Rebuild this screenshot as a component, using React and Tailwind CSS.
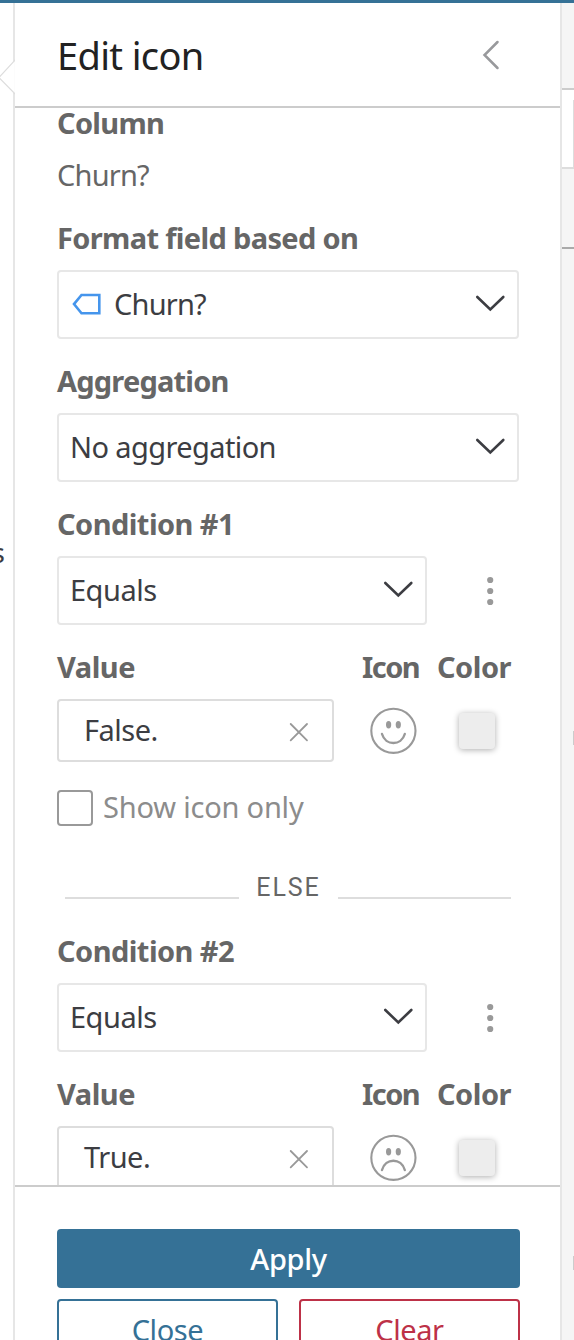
import React from "react";

const Label = ({ children, className = "" }) => (
  <div className={`h-[30px] whitespace-nowrap text-[29px] leading-[30px] font-bold text-[#666] ${className}`}>{children}</div>
);

const Chevron = ({ className = "" }) => (
  <svg width="32" height="20" viewBox="0 0 32 20" fill="none" stroke="#3c3d42" strokeWidth="2.6" strokeLinecap="round" strokeLinejoin="miter" className={`shrink-0 ${className}`}>
    <path d="M3.3 4 16.3 16.5 29.3 4" />
  </svg>
);

const Select = ({ icon, children, className = "" }) => (
  <div className={`flex h-[69px] items-center rounded-[4px] border-2 border-[#e7e7e7] bg-white pr-[11px] pl-[11px] text-[29px] font-[450] text-[#3c3d42] ${className}`}>
    {icon}
    <span className="-mt-[2px] grow leading-[30px] whitespace-nowrap">{children}</span>
    <Chevron className="-mt-[3px]" />
  </div>
);

const Face = ({ sad }) => (
  <svg width="48" height="48" viewBox="0 0 48 48" fill="none" stroke="#999" strokeWidth="2.1" className="shrink-0">
    <circle cx="24.4" cy="23.8" r="22.1" />
    <ellipse cx="19.6" cy="17.8" rx="2.6" ry="3.7" fill="#999" stroke="none" />
    <ellipse cx="29.3" cy="17.8" rx="2.6" ry="3.7" fill="#999" stroke="none" />
    {sad ? (
      <path d="M13 36C16.5 23.7 32.3 23.7 35.8 36" strokeWidth="2.4" strokeLinecap="round" />
    ) : (
      <path d="M13 27C16.5 39 32.3 39 35.8 27" strokeWidth="2.4" strokeLinecap="round" />
    )}
  </svg>
);

const Condition = ({ number, value, sad }) => (
  <>
    <Label className="tracking-[-0.55px]">Condition #{number}</Label>
    <div className="mt-[17px] flex items-center">
      <Select className="w-[370px] tracking-[-0.5px]">Equals</Select>
      <svg width="10" height="32" viewBox="0 0 10 32" fill="#999" className="ml-[58px]">
        <circle cx="5.2" cy="5" r="3.1" />
        <circle cx="5.2" cy="16" r="3.1" />
        <circle cx="5.2" cy="27" r="3.1" />
      </svg>
    </div>
    <div className="mt-[27px] flex">
      <Label className="w-[305px] tracking-[-0.5px]">Value</Label>
      <Label className="w-[75px] tracking-[-1.5px]">Icon</Label>
      <Label className="tracking-[-0.5px]">Color</Label>
    </div>
    <div className="mt-[17px] flex h-[63px] items-center">
      <div className="flex h-[63px] w-[277px] items-center rounded-[4px] border-2 border-[#ddd] bg-white pr-[23px] pl-[25px] text-[29px] font-[450] tracking-[-0.5px] text-[#3c3d42]">
        <span className="-mt-[2px] grow leading-[30px]">{value}</span>
        <svg width="20" height="20" viewBox="0 0 20 20" fill="none" stroke="#999" strokeWidth="1.8" strokeLinecap="round" className="mt-[3px]">
          <path d="M1.7 2 18 18.3M18 2 1.7 18.3" />
        </svg>
      </div>
      <div className="ml-[35px] flex">
        <Face sad={sad} />
      </div>
      <div className="ml-[42px] h-[36px] w-[36px] rounded-[4px] bg-[#ededed] shadow-[0_1px_6px_rgba(0,0,0,0.32)]" />
    </div>
  </>
);

export default function App() {
  return (
    <div className="flex h-[1340px] w-[574px] flex-col overflow-hidden bg-white font-['Noto_Sans',sans-serif]">
      <div className="h-[3px] shrink-0 bg-[#357196]" />
      <div className="flex h-[1337px]">
        <aside className="relative w-[15px] shrink-0 border-r-2 border-[#e6e6e6] bg-white">
          <svg width="15" height="38" viewBox="0 0 15 38" className="absolute top-[56px] left-0">
            <path d="M15.5 .5-1 18.5 15.5 35.5Z" fill="#fff" stroke="#ddd" strokeWidth="1.2" />
          </svg>
          <span className="absolute top-[532px] right-[8px] text-[28px] leading-[34px] font-[450] text-[#3c3d42]">s</span>
        </aside>

        <main className="flex w-[545px] shrink-0 flex-col bg-white">
          <header className="flex h-[105px] shrink-0 items-center justify-between border-b-2 border-[#ccc] pr-[60px] pl-[42px]">
            <h1 className="text-[38px] leading-[44px] font-[450] tracking-[-0.65px] text-[#222]">Edit icon</h1>
            <svg width="18" height="30" viewBox="0 0 18 30" fill="none" stroke="#98999c" strokeWidth="2.5" strokeLinecap="round">
              <path d="M15.5 2 2.5 15 15.5 28" />
            </svg>
          </header>

          <section className="h-[1077px] shrink-0 overflow-hidden pr-[41px] pl-[42px]">
            <Label className="tracking-[-0.7px]">Column</Label>
            <div className="mt-[22px] h-[30px] text-[29px] leading-[30px] font-[450] tracking-[-0.8px] text-[#666]">Churn?</div>
            <Label className="mt-[33px] tracking-[-0.65px]">Format field based on</Label>
            <Select
              className="mt-[17px] tracking-[-0.8px]"
              icon={
                <svg width="30" height="22" viewBox="0 0 30 22" fill="none" stroke="#4595ec" strokeWidth="2.6" className="-mt-[2px] mr-[12px] ml-[2px] shrink-0">
                  <path d="M9.5 2H27.3V20.3H9.5L2 11.1Z" />
                </svg>
              }
            >
              Churn?
            </Select>
            <Label className="mt-[27px] tracking-[-0.8px]">Aggregation</Label>
            <Select className="mt-[17px] mb-[27px] tracking-[-0.6px]">No aggregation</Select>

            <Condition number={1} value="False." />

            <div className="mt-[28px] flex h-[36px] items-center">
              <div className="h-[36px] w-[36px] rounded-[4px] border-2 border-[#999]" />
              <span className="-mt-[3px] ml-[10px] text-[29px] leading-[30px] font-[450] tracking-[-0.2px] text-[#8c8c8c]">Show icon only</span>
            </div>

            <div className="mt-[45px] mb-[37px] flex h-[28px] items-end justify-between pr-[8px] pl-[8px]">
              <div className="h-[2px] w-[174px] bg-[#ddd]" />
              <span className="h-[28px] font-['Roboto',sans-serif] text-[25px] leading-[34px] tracking-[1.9px] text-[#666]">ELSE</span>
              <div className="h-[2px] w-[173px] bg-[#ddd]" />
            </div>

            <Condition number={2} value="True." sad />
          </section>

          <footer className="h-[155px] shrink-0 border-t-2 border-[#ccc] pt-[42px] pr-[40px] pl-[42px] text-[29px] font-[450] tracking-[-0.4px]">
            <button className="block h-[59px] w-full rounded-[4px] bg-[#357196] font-medium tracking-[-0.3px] text-white">Apply</button>
            <div className="mt-[11px] flex justify-between">
              <button className="h-[59px] w-[221px] rounded-[4px] border-2 border-[#357196] pt-[2px] text-[#357196]">Close</button>
              <button className="h-[59px] w-[221px] rounded-[4px] border-2 border-[#bd3147] pt-[2px] text-[#bd3147]">Clear</button>
            </div>
          </footer>
        </main>

        <aside className="relative flex grow flex-col border-l-2 border-[#e6e6e6] bg-[#f5f5f5]">
          <div className="h-[85px] shrink-0" />
          <div className="flex h-[81px] shrink-0 justify-end border-y-2 border-t-[#ccc] border-b-[#ddd] bg-white pt-[10px]">
            <div className="w-[1px] bg-[#ddd]" />
          </div>
          <div className="h-[78px] shrink-0" />
          <div className="h-[2px] shrink-0 bg-[#aaa]" />
          <div className="mt-[482px] h-[14px] w-[1px] shrink-0 self-end bg-[#ccc]" />
          <div className="mt-[511px] h-[14px] w-[1px] shrink-0 self-end bg-[#ccc]" />
        </aside>
      </div>
    </div>
  );
}
